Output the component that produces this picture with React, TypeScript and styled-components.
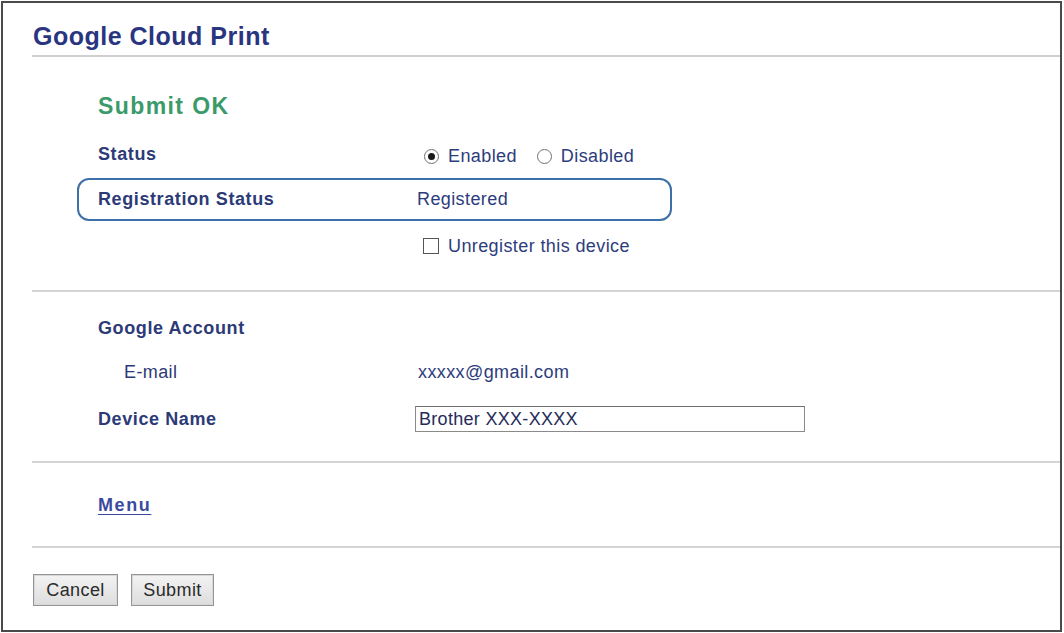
import React from "react";
import styled, { createGlobalStyle } from "styled-components";

const Global = createGlobalStyle`
  html, body { margin: 0; padding: 0; background: #ffffff; }
  body { font-family: "Liberation Sans", Arial, sans-serif; }
`;

const Frame = styled.div`
  box-sizing: border-box;
  margin: 1px 0 0 1px;
  width: 1061px;
  height: 631px;
  border: 2px solid #4a4a4a;
  padding-left: 29px;
  display: flex;
  flex-direction: column;
  overflow: hidden;
`;

const Header = styled.div`
  padding: 19px 0 5px 1px;
  border-bottom: 2px solid #cfcfcf;
`;

const Title = styled.h1`
  margin: 0;
  font-size: 25px;
  line-height: 28px;
  font-weight: bold;
  letter-spacing: 0.5px;
  color: #2a3580;
`;

const Section = styled.div<{ $top: number; $bottom: number }>`
  display: flex;
  flex-direction: column;
  padding: ${(p) => p.$top}px 0 ${(p) => p.$bottom}px 45px;
  border-bottom: 2px solid #d4d4d4;
`;

const Row = styled.div<{ $h: number; $indent?: number; $gap?: number }>`
  display: flex;
  align-items: center;
  height: ${(p) => p.$h}px;
  margin-top: ${(p) => p.$gap ?? 0}px;
  padding-left: ${(p) => 21 + (p.$indent ?? 0)}px;
`;

const HighlightRow = styled.div`
  box-sizing: border-box;
  display: flex;
  align-items: center;
  width: 595px;
  height: 43px;
  margin-top: 1px;
  padding-left: 19px;
  border: 2px solid #3d6fa8;
  border-radius: 12px;
`;

const OkText = styled.div`
  font-size: 23px;
  font-weight: bold;
  letter-spacing: 1.4px;
  color: #3a9a69;
`;

const Label = styled.div<{ $indent?: number; $plain?: boolean }>`
  width: ${(p) => 319 - (p.$indent ?? 0)}px;
  flex: none;
  font-size: 18px;
  font-weight: ${(p) => (p.$plain ? "normal" : "bold")};
  letter-spacing: ${(p) => (p.$plain ? "0.4px" : "0.6px")};
  color: #2c3a78;
`;

const Value = styled.div<{ $dx?: number; $dy?: number }>`
  display: flex;
  align-items: center;
  margin-left: ${(p) => p.$dx ?? 0}px;
  padding-top: ${(p) => p.$dy ?? 0}px;
  font-size: 18px;
  letter-spacing: 0.4px;
  color: #2d3c7c;
`;

const Choice = styled.label`
  display: flex;
  align-items: center;
  gap: 9px;
  margin-right: 20px;
`;

const Radio = styled.span<{ $on?: boolean }>`
  box-sizing: border-box;
  width: 15px;
  height: 15px;
  border-radius: 50%;
  border: 1px solid #707070;
  background: #fff;
  display: flex;
  align-items: center;
  justify-content: center;
  &::after {
    content: "";
    width: 7px;
    height: 7px;
    border-radius: 50%;
    background: ${(p) => (p.$on ? "#1a1a1a" : "transparent")};
  }
`;

const Check = styled.span`
  box-sizing: border-box;
  width: 16px;
  height: 16px;
  border: 1px solid #555;
  background: #fff;
`;

const TextInput = styled.input`
  box-sizing: border-box;
  width: 390px;
  height: 26px;
  margin-left: -2px;
  padding: 1px 3px 0;
  border: 1px solid #8a8a8a;
  border-top-color: #6f6f6f;
  font-family: "Liberation Sans", Arial, sans-serif;
  font-size: 18px;
  letter-spacing: 0.3px;
  color: #252c5a;
  outline: none;
`;

const MenuLink = styled.a`
  font-size: 18px;
  font-weight: bold;
  letter-spacing: 1.6px;
  color: #3a4aa0;
  text-decoration: underline;
  text-underline-offset: 3px;
  cursor: pointer;
`;

const Footer = styled.div`
  display: flex;
  gap: 13px;
  padding-top: 26px;
  padding-left: 1px;
`;

const Button = styled.button<{ $w: number }>`
  box-sizing: border-box;
  width: ${(p) => p.$w}px;
  height: 32px;
  border: 1px solid #959595;
  box-shadow: inset 0 0 0 1px #d8d8d8;
  background: linear-gradient(#f3f3f3, #dddddd);
  font-family: "Liberation Sans", Arial, sans-serif;
  font-size: 18px;
  letter-spacing: 0.4px;
  color: #2a2a2a;
  padding: 0;
  cursor: pointer;
`;

export default function App() {
  return (
    <>
      <Global />
      <Frame>
        <Header>
          <Title>Google Cloud Print</Title>
        </Header>

        <Section $top={28} $bottom={23}>
          <Row $h={42}>
            <OkText>Submit OK</OkText>
          </Row>
          <Row $h={46} $gap={4}>
            <Label>Status</Label>
            <Value $dx={7} $dy={4}>
              <Choice>
                <Radio $on />
                Enabled
              </Choice>
              <Choice>
                <Radio />
                Disabled
              </Choice>
            </Value>
          </Row>
          <HighlightRow>
            <Label>Registration Status</Label>
            <Value>Registered</Value>
          </HighlightRow>
          <Row $h={42} $gap={4}>
            <Label />
            <Value $dx={6}>
              <Choice>
                <Check />
                Unregister this device
              </Choice>
            </Value>
          </Row>
        </Section>

        <Section $top={14} $bottom={17}>
          <Row $h={44}>
            <Label>Google Account</Label>
          </Row>
          <Row $h={44} $indent={26}>
            <Label $indent={26} $plain>
              E-mail
            </Label>
            <Value $dx={1}>xxxxx@gmail.com</Value>
          </Row>
          <Row $h={50}>
            <Label>Device Name</Label>
            <TextInput defaultValue="Brother XXX-XXXX" />
          </Row>
        </Section>

        <Section $top={20} $bottom={19}>
          <Row $h={44}>
            <MenuLink>Menu</MenuLink>
          </Row>
        </Section>

        <Footer>
          <Button $w={85}>Cancel</Button>
          <Button $w={83}>Submit</Button>
        </Footer>
      </Frame>
    </>
  );
}
